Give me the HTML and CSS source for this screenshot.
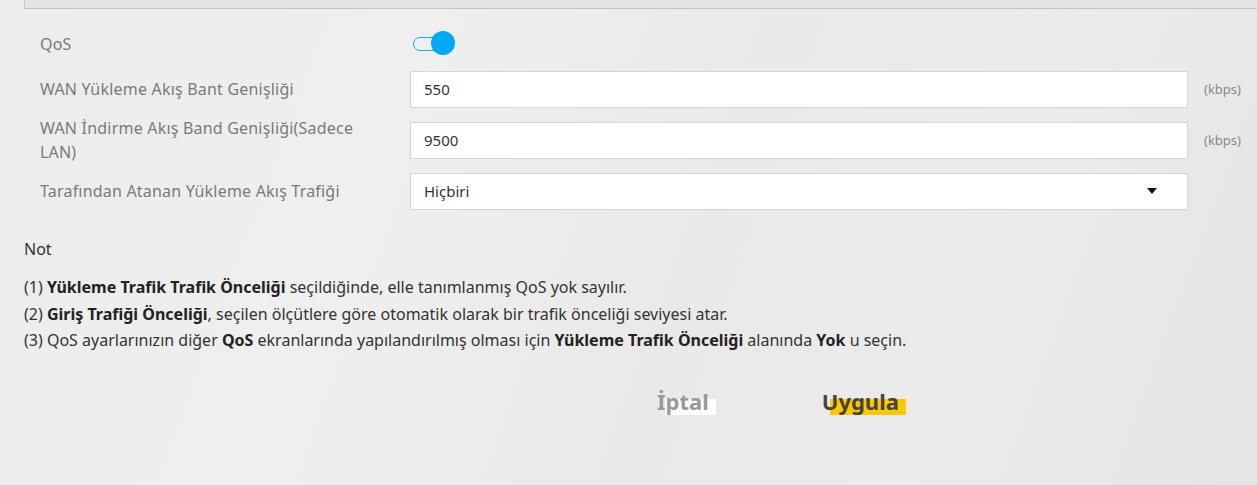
FILE: index.html
```html
<!DOCTYPE html>
<html lang="tr">
<head>
  <meta charset="UTF-8" />
  <title>QoS</title>
  <link rel="stylesheet" href="styles.css">
</head>
<body>
  <main class="page">
    <div class="top-box"></div>

    <form class="qos-form">
      <div class="row row-switch">
        <label class="label">QoS</label>
        <div class="field">
          <span class="toggle"><span class="knob"></span></span>
        </div>
      </div>
      <div class="row">
        <label class="label">WAN Yükleme Akış Bant Genişliği</label>
        <div class="field">
          <input class="input" type="text" value="550" />
          <span class="unit">(kbps)</span>
        </div>
      </div>
      <div class="row">
        <label class="label">WAN İndirme Akış Band Genişliği(Sadece LAN)</label>
        <div class="field">
          <input class="input" type="text" value="9500" />
          <span class="unit">(kbps)</span>
        </div>
      </div>
      <div class="row">
        <label class="label">Tarafından Atanan Yükleme Akış Trafiği</label>
        <div class="field">
          <div class="select">
            <span>Hiçbiri</span>
            <svg width="10" height="6" viewBox="0 0 10 6"><path d="M0 0h10L5 6z" fill="#111"/></svg>
          </div>
        </div>
      </div>
    </form>

    <section class="notes">
      <div class="notes-title">Not</div>
      <p>(1) <b>Yükleme Trafik Trafik Önceliği</b> seçildiğinde, elle tanımlanmış QoS yok sayılır.</p>
      <p>(2) <b>Giriş Trafiği Önceliği</b>, seçilen ölçütlere göre otomatik olarak bir trafik önceliği seviyesi atar.</p>
      <p>(3) QoS ayarlarınızın diğer <b>QoS</b> ekranlarında yapılandırılmış olması için <b>Yükleme Trafik Önceliği</b> alanında <b>Yok</b> u seçin.</p>
    </section>

    <div class="actions">
      <button class="btn btn-cancel" type="button">İptal</button>
      <button class="btn btn-apply" type="button">Uygula</button>
    </div>
  </main>
</body>
</html>
```

FILE: styles.css
```css
body {
  margin: 0;
  font-family: "Noto Sans", "DejaVu Sans", sans-serif;
  background: linear-gradient(110deg, #ececec 0%, #efefef 30%, #e9e9e9 55%, #ebebeb 75%, #e5e5e5 100%);
  color: #333;
  height: 485px;
  overflow: hidden;
}

.page {
  padding: 0 0 0 24px;
}

.top-box {
  height: 8px;
  background: #e3e3e3;
  border-left: 1px solid #c9c9c9;
  border-bottom: 1px solid #c4c4c4;
  margin-bottom: 23px;
}

.qos-form {
  display: flex;
  flex-direction: column;
  gap: 15px;
  padding-left: 16px;
}

/* rows keep the input height, long labels spill over */
.row {
  display: flex;
  align-items: center;
  height: 36px;
}

.row-switch {
  height: 24px;
}

.label {
  width: 330px;
  padding-right: 40px;
  font-size: 16px;
  letter-spacing: 0.2px;
  line-height: 24px;
  color: #7a7a7a;
}

.field {
  display: flex;
  align-items: center;
}

.toggle {
  position: relative;
  display: inline-block;
  width: 28px;
  height: 12px;
  margin-left: 3px;
  border: 1.5px solid #1aa7f0;
  border-radius: 8px;
}

.knob {
  position: absolute;
  right: -13px;
  top: -7px;
  width: 24px;
  height: 24px;
  border-radius: 50%;
  background: #00a9f4;
}

.input,
.select {
  box-sizing: border-box;
  width: 778px;
  height: 37px;
  border: 1px solid #d5d5d5;
  background: #fff;
  padding: 0 13px;
  font-family: inherit;
  font-size: 15px;
  color: #333;
  outline: none;
}

.select {
  display: flex;
  align-items: center;
  justify-content: space-between;
  padding-right: 30px;
}

.unit {
  margin-left: 16px;
  font-size: 13px;
  color: #888;
}

.notes {
  margin-top: 29px;
  font-size: 16px;
  color: #333;
}

.notes-title {
  margin-bottom: 17px;
}

.notes p {
  margin: 0 0 5px;
  line-height: 21.5px;
}

.notes b {
  font-weight: 700;
  color: #222;
}

.actions {
  display: flex;
  gap: 106px;
  padding-left: 633px;
  margin-top: 37px;
}

.btn {
  border: none;
  padding: 0 7px 4px 0;
  font-family: inherit;
  font-size: 22px;
  font-weight: 700;
  line-height: 24px;
  cursor: pointer;
  background-color: transparent;
  background-image: linear-gradient(var(--hl), var(--hl));
  background-repeat: no-repeat;
  background-position: 8px 10px;
  background-size: calc(100% - 8px) 16px;
}

.btn-cancel {
  --hl: #ffffff;
  color: #999;
}

.btn-apply {
  --hl: #ffc800;
  color: #444;
}
```
